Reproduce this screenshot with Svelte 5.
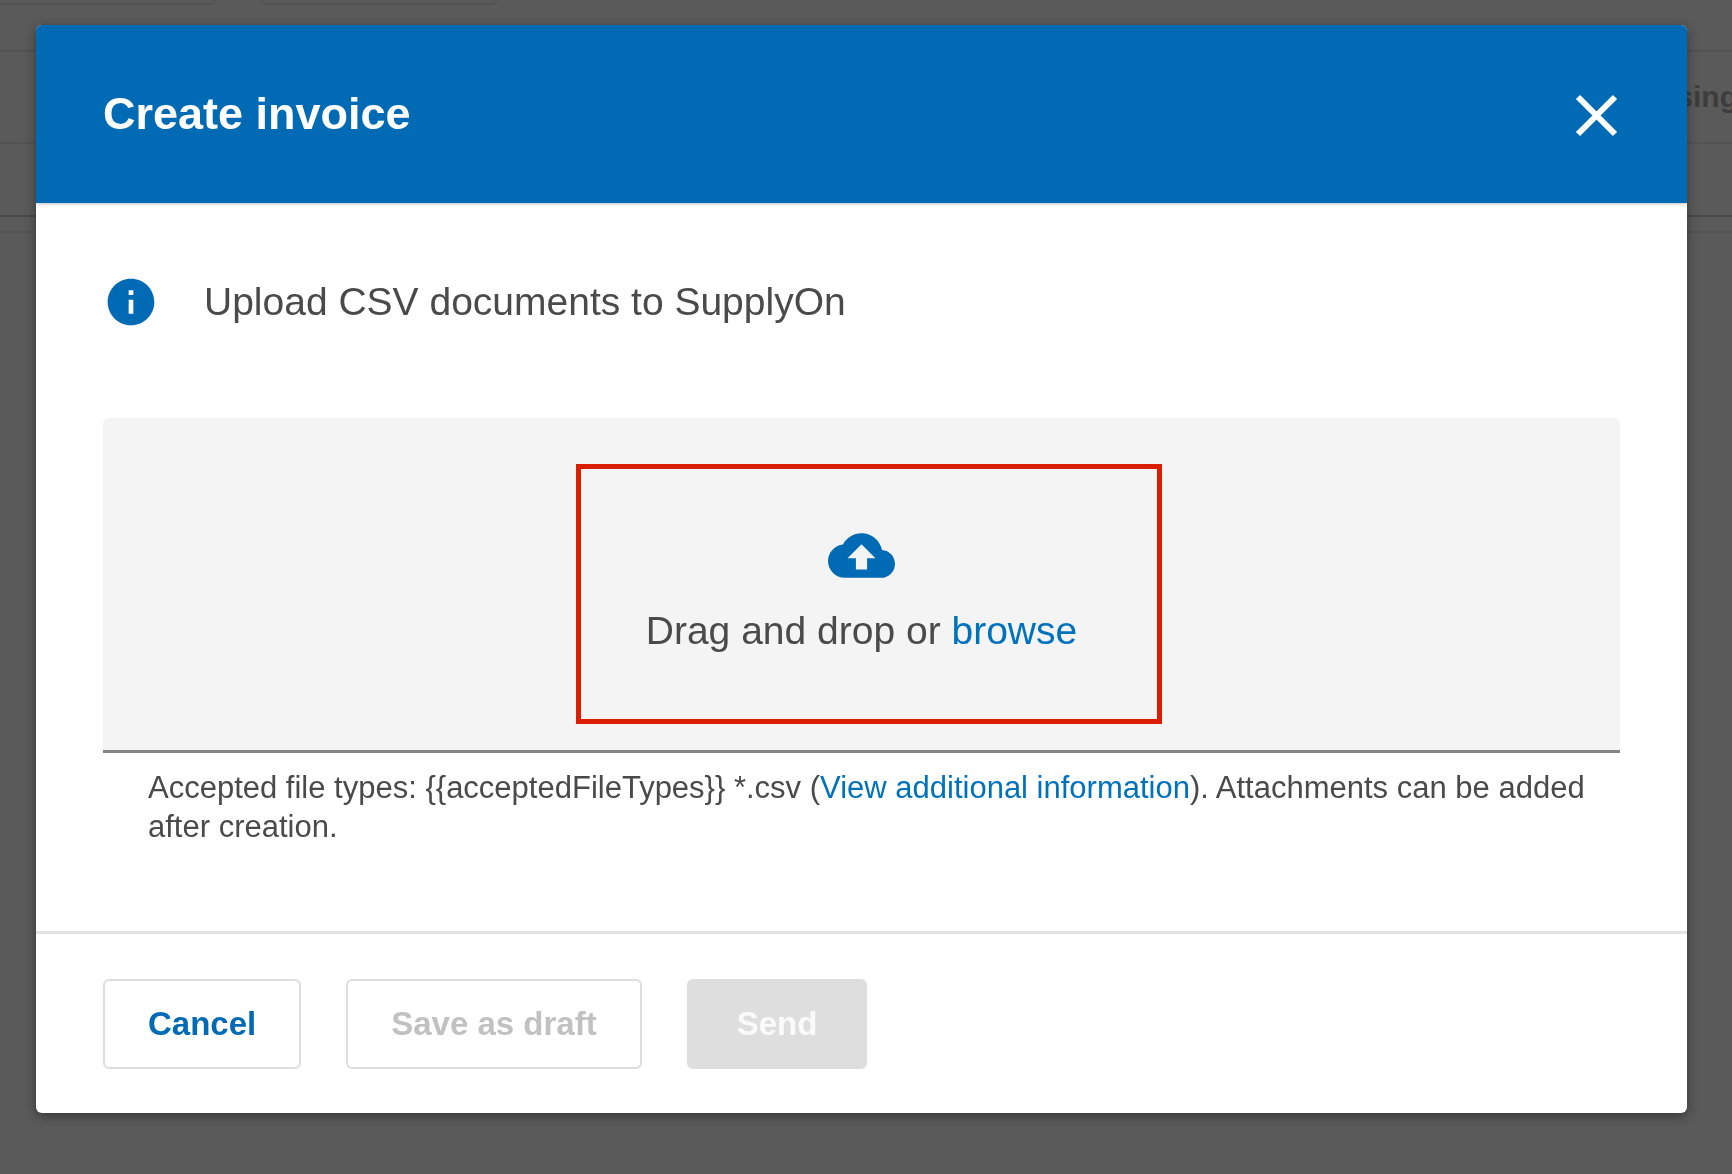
<script lang="ts">
	let { onClose = () => {} }: { onClose?: () => void } = $props();

	const acceptedFileTypes = '{{acceptedFileTypes}} *.csv';
	let fileInput: HTMLInputElement;
	let files = $state<FileList | null>(null);
	let canSubmit = $derived(!!files?.length);

	function onDrop(e: DragEvent) {
		e.preventDefault();
		files = e.dataTransfer?.files ?? null;
	}
</script>

<div class="page" aria-hidden="true">
	<div class="filters">
		<div class="filter"></div>
		<div class="filter wide"></div>
	</div>
	<div class="row toolbar"></div>
	<div class="row columns">sing</div>
	<div class="row search"></div>
	<div class="row scroll"></div>
</div>

<div class="overlay">
	<div class="dialog" role="dialog" aria-modal="true" aria-labelledby="dialog-title">
		<header>
			<h2 id="dialog-title">Create invoice</h2>
			<button class="close" aria-label="Close" onclick={onClose}>
				<svg viewBox="0 0 45 45"><path d="M3 5L40 42M40 5L3 42" /></svg>
			</button>
		</header>

		<div class="body">
			<div class="info">
				<svg viewBox="0 0 24 24"><path d="M12 2C6.48 2 2 6.48 2 12s4.48 10 10 10 10-4.480 10-10S17.520 2 12 2zm1 15h-2v-6h2v6zm0-8h-2V7h2v2z" /></svg>
				<p>Upload CSV documents to SupplyOn</p>
			</div>

			<div class="dropzone" role="group" aria-label="File upload" ondragover={(e) => e.preventDefault()} ondrop={onDrop}>
				<svg viewBox="0 0 24 24"><path d="M19.35 10.04C18.67 6.59 15.64 4 12 4 9.11 4 6.6 5.64 5.35 8.04 2.34 8.36 0 10.91 0 14c0 3.31 2.69 6 6 6h13c2.76 0 5-2.24 5-5 0-2.640-2.050-4.780-4.650-4.960zM14 13v4h-4v-4H7l5-5 5 5h-3z" /></svg>
				<p>Drag and drop or <button class="browse" onclick={() => fileInput.click()}>browse</button></p>
				<input type="file" accept=".csv" aria-label="CSV file" hidden bind:this={fileInput} bind:files />
				<div class="marker"></div>
			</div>

			<p class="hint">
				Accepted file types: {acceptedFileTypes} (<a href="#info">View additional information</a>). Attachments can be added after creation.
			</p>
		</div>

		<footer>
			<button class="btn" onclick={onClose}>Cancel</button>
			<button class="btn" disabled={!canSubmit}>Save as draft</button>
			<button class="btn primary" disabled={!canSubmit}>Send</button>
		</footer>
	</div>
</div>

<style>
	:global(body) { background: #5a5a5a; font-family: Arial, "Liberation Sans", sans-serif; color: #4a4a4a; }
	h2, p { margin: 0; font-weight: 400; }
	button { font-family: inherit; cursor: pointer; }
	svg { display: block; fill: #006bb4; }
	a { color: #0072bc; text-decoration: none; }

	/* dimmed list behind the dialog */
	.page { min-height: 100vh; overflow: hidden; }
	.filters { display: flex; gap: 45px; height: 5px; }
	.filter { box-sizing: border-box; width: 216px; border: 2px solid #535353; border-width: 0 2px 2px 0; border-radius: 0 0 6px 0; }
	.filter.wide { width: 236px; border-width: 0 2px 2px; border-radius: 0 0 6px 6px; }
	.row { box-sizing: border-box; border-bottom: 2px solid #535353; }
	.toolbar { height: 47px; }
	.columns { height: 92px; display: flex; align-items: center; justify-content: flex-end; margin-right: -6px; color: #3d3d3d; font-size: 30px; font-weight: 700; }
	.search { height: 73px; border-color: #494949; }
	.scroll { height: 16px; }

	.overlay { position: fixed; inset: 0; padding: 25px 45px 25px 36px; overflow: auto; }
	.dialog { background: #fff; border-radius: 6px; overflow: hidden; box-shadow: 0 3px 12px rgba(0,0,0,0.4); }

	header { display: flex; align-items: center; justify-content: space-between; height: 178px; padding: 0 67px; background: #006bb4; box-shadow: 0 1px 3px rgba(0,0,0,0.25); }
	h2 { color: #fff; font-size: 45px; line-height: 50px; font-weight: 700; }
	.close { padding: 0; border: none; background: none; }
	.close svg { width: 45px; height: 45px; fill: none; stroke: #fff; stroke-width: 6; }

	.body { padding: 71px 67px 85px; }
	.info { display: flex; align-items: center; gap: 45px; margin-bottom: 88px; font-size: 39px; }
	.info svg { width: 56px; height: 56px; }

	.dropzone { position: relative; box-sizing: border-box; height: 335px; padding-top: 104px; display: flex; flex-direction: column; align-items: center; background: #f4f4f4; border-bottom: 3px solid #858585; border-radius: 6px 6px 0 0; font-size: 39px; }
	.dropzone svg { width: 67px; height: 67px; margin-bottom: 20px; }
	.browse { padding: 0; border: none; background: none; color: #0072bc; font-size: inherit; }
	.marker { position: absolute; top: 46px; left: 50%; box-sizing: border-box; width: 586px; height: 260px; margin-left: -286px; border: 5px solid #dc1e00; pointer-events: none; }

	.hint { padding: 15px 30px 0 45px; font-size: 31px; line-height: 39px; }

	footer { display: flex; flex-wrap: wrap; gap: 45px; padding: 45px 67px 44px; border-top: 3px solid #e2e2e2; }
	.btn { height: 90px; padding: 0 43px; border: 2px solid #dedede; border-radius: 6px; background: #fff; color: #006bb4; font-size: 33px; font-weight: 700; }
	.btn:disabled { color: #c1c1c1; cursor: default; }
	.btn.primary { padding: 0 48px; background: #006bb4; color: #fff; }
	.btn.primary:disabled { background: #dedede; color: #fafafa; }
</style>
